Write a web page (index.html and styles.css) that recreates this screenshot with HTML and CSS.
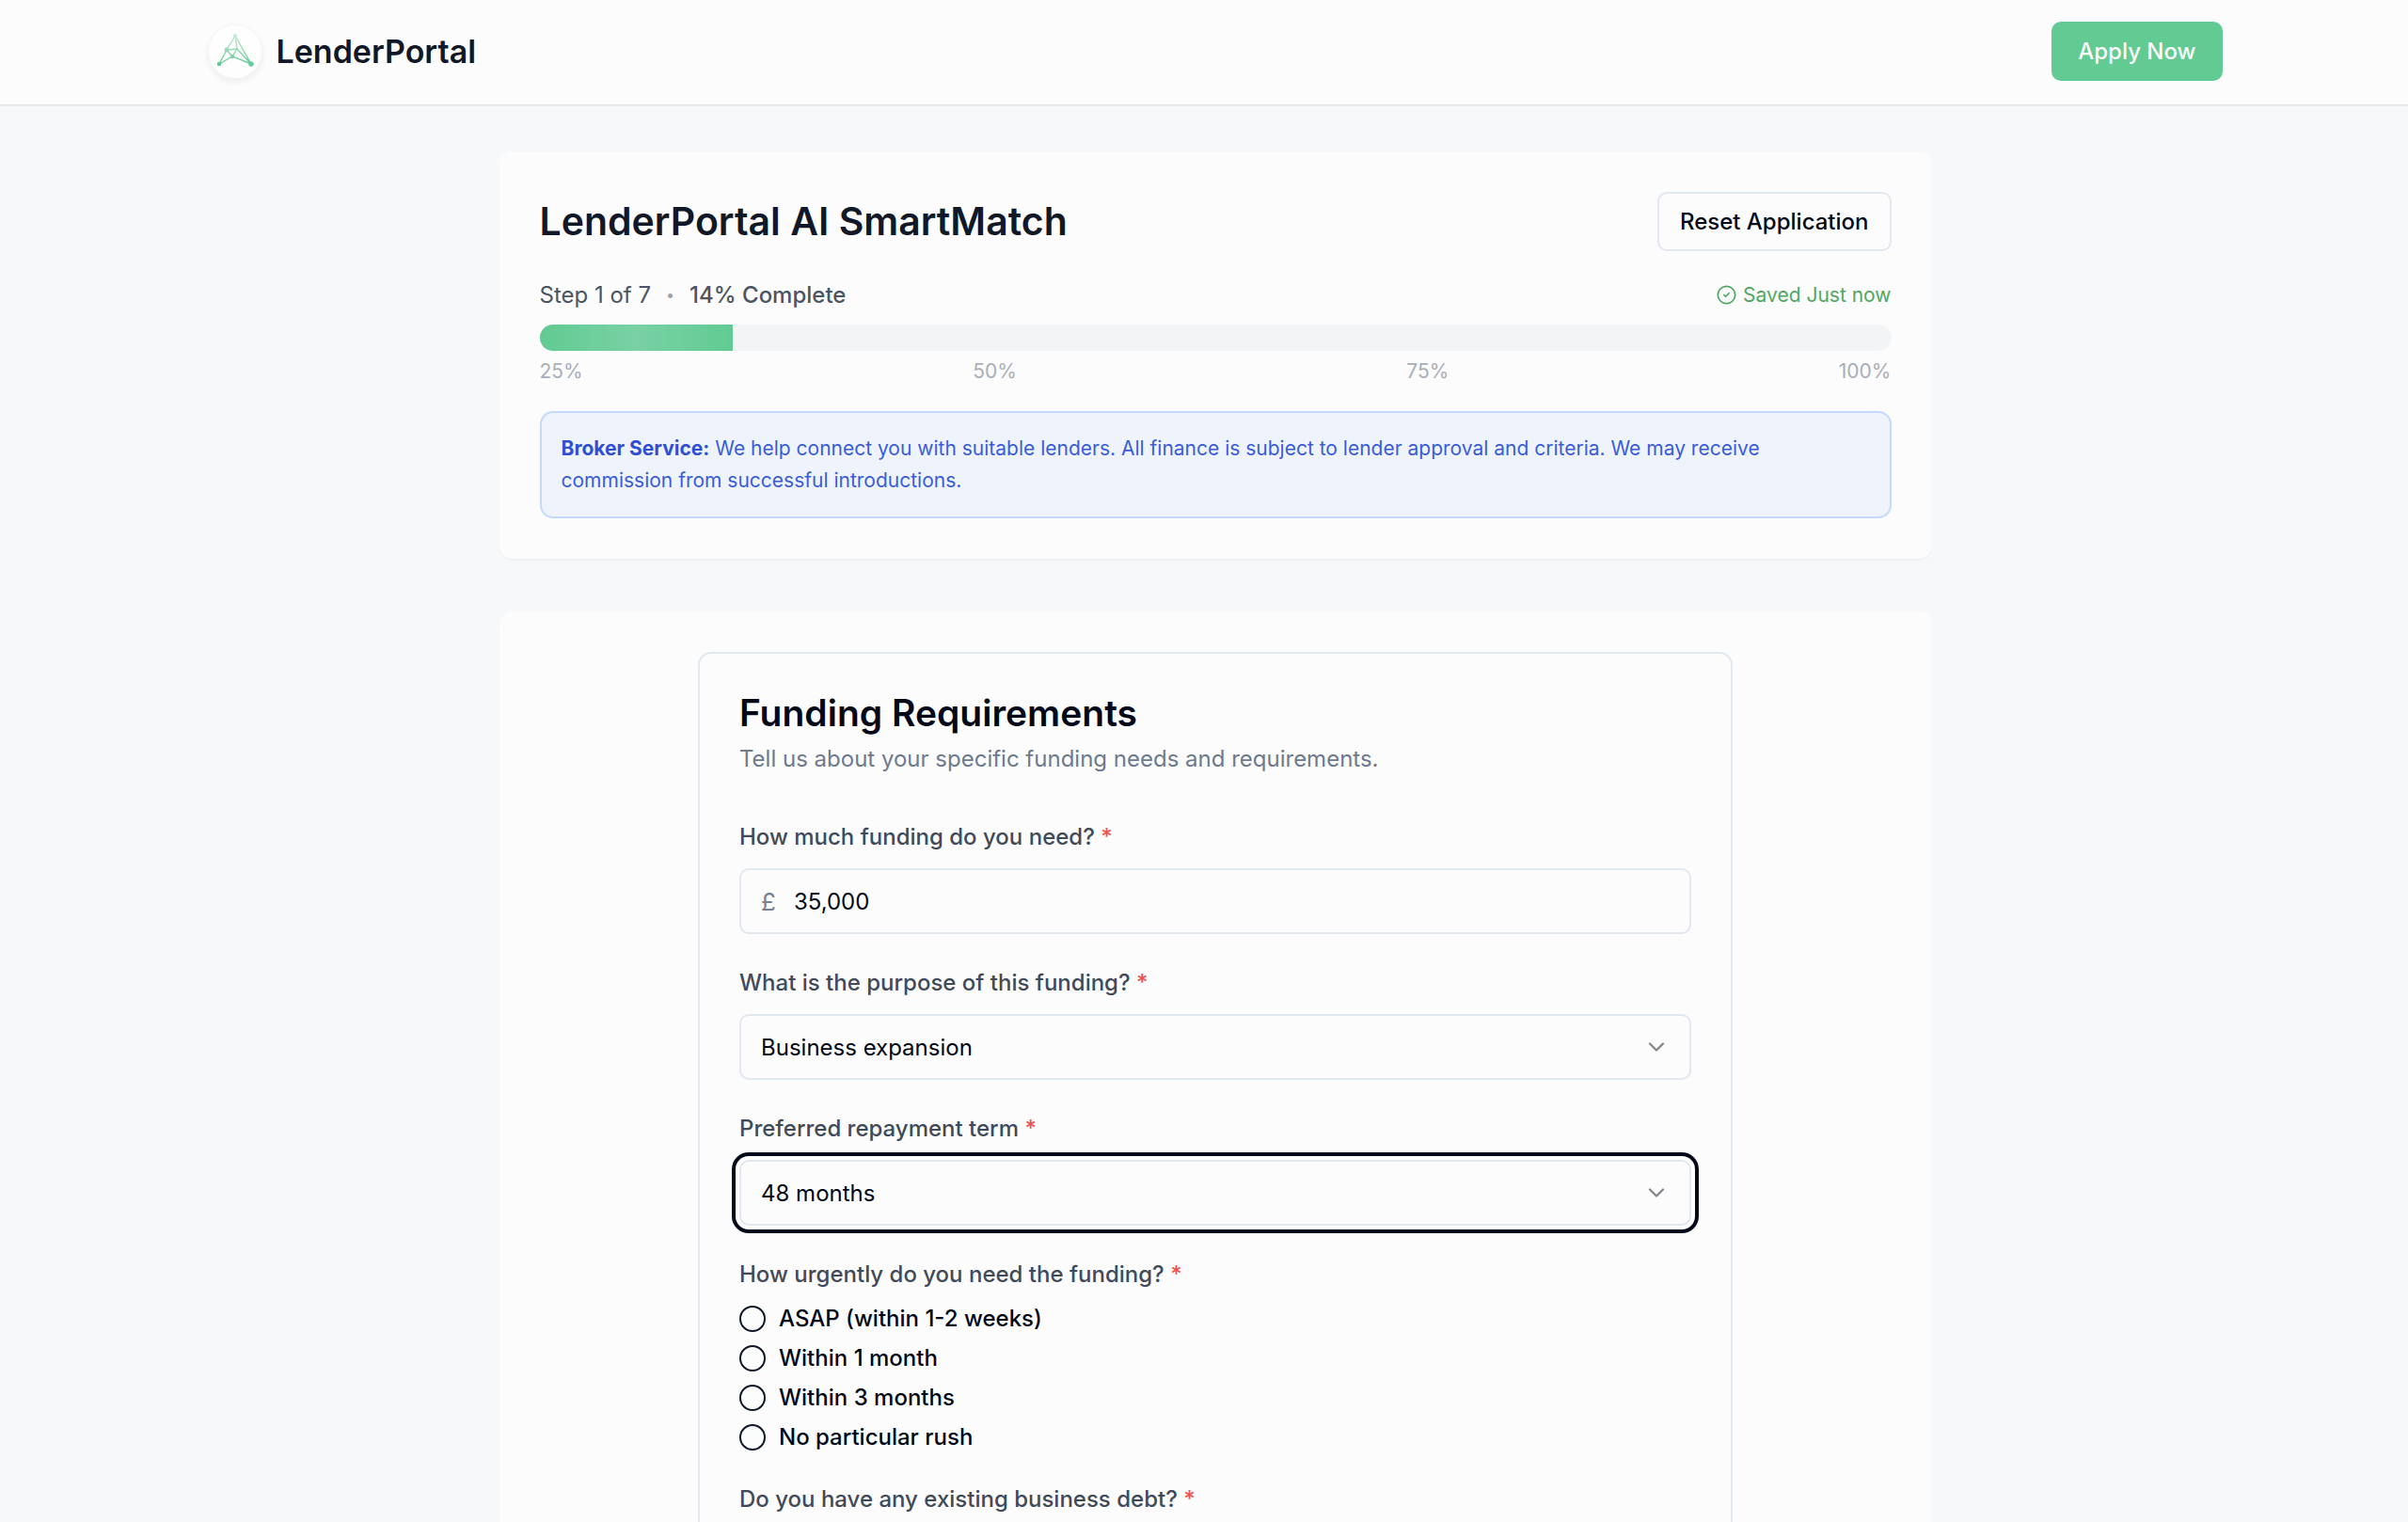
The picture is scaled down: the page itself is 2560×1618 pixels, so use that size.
FILE: index.html
```html
<!DOCTYPE html>
<html lang="en">
<head>
  <meta charset="UTF-8">
  <meta name="viewport" content="width=device-width, initial-scale=1.0">
  <title>LenderPortal AI SmartMatch</title>
  <link rel="stylesheet" href="styles.css">
</head>
<body>
  <header class="site-header">
    <div class="header-inner">
      <a class="brand" href="#">
        <span class="brand-logo">
          <svg viewBox="0 0 56 56" width="56" height="56" fill="none" aria-hidden="true">
            <defs>
              <linearGradient id="mesh" gradientUnits="userSpaceOnUse" x1="28" y1="10" x2="28" y2="42">
                <stop offset="0" stop-color="#c3ead6"/>
                <stop offset="1" stop-color="#61cb93"/>
              </linearGradient>
            </defs>
            <g stroke="url(#mesh)" stroke-width="1.4">
              <path d="M28 11 19 26 11 41 25 33 45 41 28 11 30 25 19 26 25 33 30 25 45 41"/>
            </g>
            <g fill="url(#mesh)">
              <circle cx="28" cy="11" r="2"/>
              <circle cx="19" cy="26" r="2.4"/>
              <circle cx="30" cy="25" r="1.2"/>
              <circle cx="25" cy="33" r="2.2"/>
              <circle cx="11" cy="41" r="2.3"/>
              <circle cx="45" cy="41" r="2.7"/>
            </g>
          </svg>
        </span>
        <span class="brand-name">LenderPortal</span>
      </a>
      <button type="button" class="btn btn-primary">Apply Now</button>
    </div>
  </header>

  <main class="page">
    <!-- Progress -->
    <section class="card">
      <div class="card-top">
        <h1>LenderPortal AI SmartMatch</h1>
        <button type="button" class="btn btn-outline">Reset Application</button>
      </div>

      <div class="status">
        <div class="status-step">
          <span>Step 1 of 7</span>
          <span class="dot">•</span>
          <span class="complete">14% Complete</span>
        </div>
        <div class="saved">
          <svg viewBox="0 0 24 24" width="21" height="21" fill="none" stroke="currentColor" stroke-width="2" stroke-linecap="round" stroke-linejoin="round" aria-hidden="true">
            <circle cx="12" cy="12" r="10.5"/>
            <path d="m9 12 2 2 4-4"/>
          </svg>
          <span>Saved Just now</span>
        </div>
      </div>

      <div class="progress" role="progressbar" aria-label="Application progress" aria-valuemin="0" aria-valuemax="100" aria-valuenow="14">
        <div class="progress-fill" style="width: 14.28%"></div>
      </div>
      <div class="marks">
        <span>25%</span>
        <span>50%</span>
        <span>75%</span>
        <span>100%</span>
      </div>

      <p class="notice"><strong>Broker Service:</strong> We help connect you with suitable lenders. All finance is subject to lender approval and criteria. We may receive commission from successful introductions.</p>
    </section>

    <!-- Current step -->
    <section class="card">
      <form class="step-form">
        <h2>Funding Requirements</h2>
        <p class="intro">Tell us about your specific funding needs and requirements.</p>

        <div class="field">
          <label for="amount">How much funding do you need? <span class="required">*</span></label>
          <div class="control money">
            <span class="currency">£</span>
            <input type="text" id="amount" inputmode="numeric" value="35,000">
          </div>
        </div>

        <div class="field">
          <label for="purpose">What is the purpose of this funding? <span class="required">*</span></label>
          <div class="select-wrap">
            <select id="purpose" class="control">
              <option>Business expansion</option>
            </select>
            <svg class="chevron" viewBox="0 0 24 24" width="28" height="28" aria-hidden="true"><path d="m6 9 6 6 6-6"/></svg>
          </div>
        </div>

        <div class="field">
          <label for="term">Preferred repayment term <span class="required">*</span></label>
          <div class="select-wrap">
            <select id="term" class="control is-focused">
              <option>48 months</option>
            </select>
            <svg class="chevron" viewBox="0 0 24 24" width="28" height="28" aria-hidden="true"><path d="m6 9 6 6 6-6"/></svg>
          </div>
        </div>

        <fieldset class="field">
          <legend>How urgently do you need the funding? <span class="required">*</span></legend>
          <div class="options">
            <label class="option"><input type="radio" name="urgency" value="asap">ASAP (within 1-2 weeks)</label>
            <label class="option"><input type="radio" name="urgency" value="1-month">Within 1 month</label>
            <label class="option"><input type="radio" name="urgency" value="3-months">Within 3 months</label>
            <label class="option"><input type="radio" name="urgency" value="no-rush">No particular rush</label>
          </div>
        </fieldset>

        <fieldset class="field">
          <legend>Do you have any existing business debt? <span class="required">*</span></legend>
        </fieldset>
      </form>
    </section>
  </main>
</body>
</html>
```
FILE: styles.css
```css
* {
  box-sizing: border-box;
}

body {
  margin: 0;
  padding-left: 24px;
  background-color: #f7f8fa;
  color: #020817;
  font-family: Inter, "Liberation Sans", sans-serif;
  font-size: 24px;
  line-height: 35px;
}

h1, h2, p {
  margin: 0;
}

button, input, select {
  font: inherit;
  color: inherit;
}

/* Header */
.site-header {
  margin-left: -24px;
  padding: 23px 56px 25px 80px;
  background-color: #fcfcfc;
  border-bottom: 1px solid #e2e4e9;
  box-shadow: 0 1px 0 #eaecf1;
}

.header-inner {
  display: flex;
  justify-content: space-between;
  align-items: center;
  max-width: 2141px;
  margin: 0 auto;
}

.brand {
  display: flex;
  align-items: center;
  gap: 16px;
  color: #111827;
  text-decoration: none;
}

.brand-logo {
  display: flex;
  border-radius: 50%;
  background-color: #fefefe;
  box-shadow: 0 3px 5px 3px rgba(15, 23, 42, 0.04);
}

.brand-name {
  font-size: 34px;
  font-weight: 600;
}

.btn {
  height: 63px;
  border-radius: 10px;
  font-weight: 500;
  cursor: pointer;
}

.btn-primary {
  padding: 0 28px;
  border: none;
  background-color: #61cb93;
  color: #fcfcfc;
}

.btn-outline {
  padding: 0 22px;
  border: 2px solid #e2e8f0;
  background-color: #fcfcfc;
}

/* Cards */
.page {
  max-width: 1523px;
  margin: 0 auto;
  padding: 49px 0 56px;
}

.card {
  margin-bottom: 56px;
  padding: 43px;
  border-radius: 14px;
  background-color: #fcfcfc;
  box-shadow: 0 2px 2px rgba(0, 0, 0, 0.03);
}

.card-top, .status, .marks {
  display: flex;
  justify-content: space-between;
  align-items: center;
}

h1 {
  color: #111827;
  font-size: 41px;
  font-weight: 600;
}

.status {
  margin: 29px 0 14px;
  color: #4b5563;
}

.status-step {
  display: flex;
  gap: 16px;
}

.dot {
  color: #9ca3af;
  font-size: 16px;
}

.complete {
  font-weight: 500;
}

.saved {
  display: flex;
  align-items: center;
  gap: 7px;
  color: #4fa862;
  font-size: 21px;
}

.progress {
  height: 28px;
  border-radius: 14px;
  background-color: #f3f4f6;
  overflow: hidden;
}

.progress-fill {
  height: 100%;
  background-image: linear-gradient(to right, #61cb93, #79d1a4, #61cb93);
}

.marks {
  margin: 8px 0 28px;
  color: #a9afba;
  font-size: 21px;
  line-height: 28px;
}

.notice {
  padding: 21px;
  border: 2px solid #c3dafc;
  border-radius: 14px;
  background-color: #eff4fc;
  color: #3a5cdb;
  font-size: 21px;
  line-height: 34px;
}

.notice strong {
  color: #2f50d4;
  font-weight: 700;
}

/* Form */
.step-form {
  max-width: 1100px;
  margin: 0 auto;
  padding: 42px;
  border: 2px solid #e2e8f0;
  border-radius: 14px;
}

h2 {
  font-size: 39px;
  font-weight: 600;
  line-height: 42px;
}

.intro {
  margin: 10px 0 48px;
  color: #6d7a8f;
}

.field {
  min-width: 0;
  margin: 0 0 34px;
  padding: 0;
  border: none;
}

.field > label, legend {
  display: block;
  margin-bottom: 16px;
  padding: 0;
  color: #414a59;
  font-weight: 500;
}

.required {
  color: #e9564f;
}

.control {
  width: 100%;
  height: 70px;
  padding: 0 21px;
  border: 2px solid #e2e8f0;
  border-radius: 10px;
  background-color: #fcfcfc;
}

.money {
  display: flex;
  align-items: center;
  gap: 19px;
}

.currency {
  color: #7b818c;
  font-size: 26px;
}

.money input {
  flex: 1;
  min-width: 0;
  padding: 0;
  border: none;
  outline: none;
  background: none;
}

.select-wrap {
  position: relative;
}

select.control {
  display: block;
  appearance: none;
}

.is-focused {
  outline: none;
  box-shadow: 0 0 0 4px #fff, 0 0 0 8px #020817;
}

.chevron {
  position: absolute;
  top: 21px;
  right: 23px;
  fill: none;
  stroke: #84878d;
  stroke-width: 2;
  stroke-linecap: round;
  stroke-linejoin: round;
  pointer-events: none;
}

.options {
  display: grid;
  gap: 14px;
}

.option {
  display: flex;
  align-items: center;
  gap: 14px;
  font-weight: 500;
  line-height: 28px;
}

.option input {
  appearance: none;
  width: 28px;
  height: 28px;
  margin: 0;
  border: 2px solid #0f172a;
  border-radius: 50%;
}

.option input:checked {
  background-color: #0f172a;
  box-shadow: inset 0 0 0 6px #fcfcfc;
}
```
